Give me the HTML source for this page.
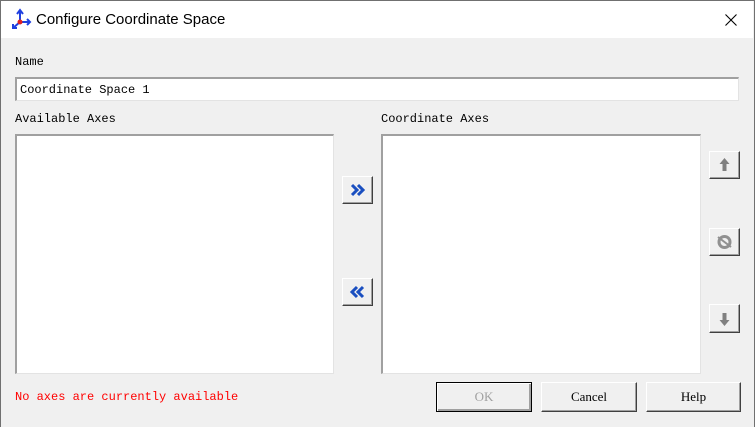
<!DOCTYPE html>
<html><head><style>
*{margin:0;padding:0;box-sizing:border-box}
body{width:755px;height:427px;background:#f0f0f0;position:relative;overflow:hidden;font-family:"Liberation Mono",monospace;font-size:12px;color:#000}
.win{position:absolute;left:0;top:0;width:755px;height:427px;border:1px solid #707070;border-bottom:none}
.title{position:absolute;left:1px;top:1px;width:752px;height:37px;background:#fff}
.title span{position:absolute;left:35px;top:10px;font-family:"Liberation Sans",sans-serif;font-size:15px}
.abs{position:absolute}
.sunk{background:#fff;border-top:2px solid #a0a0a0;border-left:2px solid #a0a0a0;border-right:1px solid #e3e3e3;border-bottom:1px solid #e3e3e3}
.btn{position:absolute;background:#f0f0f0;border-top:1px solid #fff;border-left:1px solid #fff;border-right:1px solid #404040;border-bottom:1px solid #404040;box-shadow:inset -1px -1px 0 #a0a0a0;text-align:center;font-family:"Liberation Serif",serif;font-size:13px}
</style></head><body>
<div class="win"></div>
<div class="title"><svg class="abs" style="left:9px;top:7px" width="22" height="22" viewBox="0 0 22 22">
<path d="M10 14V3M7 6l3-4 3 4" stroke="#2040e0" stroke-width="2" fill="none"/>
<path d="M10 14H20M17 11l3 3-3 3" stroke="#2040e0" stroke-width="2" fill="none"/>
<path d="M10 14L3 20M3 16v4h4" stroke="#2040e0" stroke-width="2" fill="none"/>
<circle cx="10" cy="14" r="2.5" fill="#e02020"/></svg><span>Configure Coordinate Space</span>
<svg class="abs" style="left:724px;top:13px" width="12" height="12"><path d="M0.5 0.5L11.5 11.5M11.5 0.5L0.5 11.5" stroke="#000" stroke-width="1.1"/></svg></div>
<div class="abs" style="left:15px;top:55px">Name</div>
<div class="abs sunk" style="left:15px;top:77px;width:724px;height:24px"><div style="padding:4px 0 0 3px">Coordinate Space 1</div></div>
<div class="abs" style="left:15px;top:112px">Available Axes</div>
<div class="abs" style="left:381px;top:112px">Coordinate Axes</div>
<div class="abs sunk" style="left:15px;top:134px;width:319px;height:240px"></div>
<div class="abs sunk" style="left:381px;top:134px;width:320px;height:240px"></div>
<div class="btn" style="left:342px;top:176px;width:31px;height:28px"><svg width="29" height="26"><path d="M9 8l5 5-5 5M15 8l5 5-5 5" stroke="#1a4fc0" stroke-width="3" fill="none"/></svg></div>
<div class="btn" style="left:342px;top:278px;width:31px;height:28px"><svg width="29" height="26"><path d="M14 8l-5 5 5 5M20 8l-5 5 5 5" stroke="#1a4fc0" stroke-width="3" fill="none"/></svg></div>
<div class="btn" style="left:709px;top:151px;width:31px;height:28px"><svg width="29" height="26"><path d="M14.5 6l-5 6h3v7h4v-7h3z" fill="#808080"/></svg></div>
<div class="btn" style="left:709px;top:228px;width:31px;height:28px"><svg width="29" height="26"><circle cx="14.5" cy="13" r="5.5" fill="none" stroke="#909090" stroke-width="3"/><path d="M8 8l13 10" stroke="#909090" stroke-width="2"/></svg></div>
<div class="btn" style="left:709px;top:304px;width:31px;height:29px"><svg width="29" height="27"><path d="M14.5 21l-5-6h3v-7h4v7h3z" fill="#808080"/></svg></div>
<div class="abs" style="left:15px;top:390px;color:#ff0000">No axes are currently available</div>
<div class="btn" style="left:436px;top:382px;width:96px;height:30px;border:1px solid #000;box-shadow:inset 1px 1px 0 #fff,inset -2px -2px 0 #a0a0a0;color:#a0a0a0;line-height:28px">OK</div>
<div class="btn" style="left:541px;top:382px;width:96px;height:30px;line-height:28px">Cancel</div>
<div class="btn" style="left:646px;top:382px;width:95px;height:30px;line-height:28px">Help</div>
</body></html>
